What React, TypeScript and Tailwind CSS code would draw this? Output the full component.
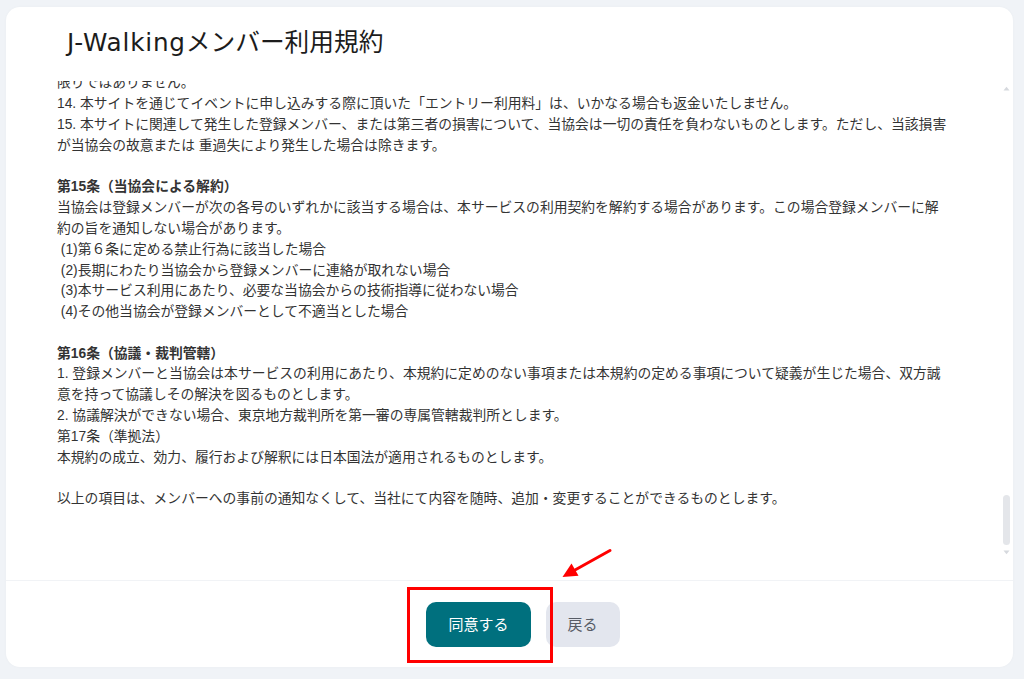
import { useLayoutEffect, useRef } from "react";

type Section = { title?: string; lines: string[] };

const sections: Section[] = [
  {
    title: "第1条（目的）",
    lines: [
      "本規約は、一般社団法人日本ウオーキング協会（以下「当協会」といいます。）が運営するJ-Walking（以下「本サイト」といいます。）において提供するサービス（以下「本サービス」といいます。）の利用条件を定めるものです。",
    ],
  },
  {
    title: "第2条（定義）",
    lines: ["本規約において「登録メンバー」とは、本規約に同意のうえ、当協会所定の手続きにより登録を行った個人をいいます。"],
  },
  {
    title: "第3条（規約への同意）",
    lines: [
      "1. 登録メンバーは、本規約の内容に同意したうえで本サービスを利用するものとします。",
      "2. 当協会は、必要と判断した場合には、登録メンバーに通知することなく本規約を変更できるものとします。",
      "3. 変更後の本規約は、本サイト上に掲載した時点から効力を生じるものとします。",
    ],
  },
  {
    title: "第4条（メンバー登録）",
    lines: [
      "1. 本サービスの利用を希望する者は、当協会の定める方法により登録を申請するものとします。",
      "2. 当協会は、登録申請者が次の各号のいずれかに該当する場合、登録を承認しないことがあります。",
      " (1)登録申請の内容に虚偽、誤記または記載漏れがあった場合",
      " (2)過去に本規約に違反したことがある場合",
      " (3)その他当協会が登録を適当でないと判断した場合",
    ],
  },
  {
    title: "第5条（ID及びパスワードの管理）",
    lines: [
      "1. 登録メンバーは、自己の責任においてID及びパスワードを適切に管理するものとします。",
      "2. ID及びパスワードを第三者に利用させ、または貸与、譲渡、売買等をしてはならないものとします。",
      "3. ID及びパスワードの管理不十分、使用上の過誤、第三者の使用等による損害の責任は登録メンバーが負うものとし、当協会は一切の責任を負いません。",
    ],
  },
  {
    title: "第6条（禁止事項）",
    lines: [
      "登録メンバーは、本サービスの利用にあたり、以下の行為をしてはならないものとします。",
      " (1)法令または公序良俗に違反する行為",
      " (2)犯罪行為に関連する行為",
      " (3)当協会、他の登録メンバーまたは第三者の著作権、肖像権その他の権利を侵害する行為",
      " (4)他の登録メンバーまたは第三者を誹謗中傷し、または名誉を傷つける行為",
      " (5)本サービスの運営を妨害するおそれのある行為",
      " (6)不正アクセスをし、またはこれを試みる行為",
      " (7)他の登録メンバーになりすます行為",
      " (8)本サービスを営利目的で利用する行為",
      " (9)その他当協会が不適切と判断する行為",
    ],
  },
  {
    title: "第7条（登録情報の変更）",
    lines: ["登録メンバーは、登録情報に変更が生じた場合には、速やかに当協会所定の方法により変更の手続きを行うものとします。"],
  },
  {
    title: "第8条（個人情報の取扱い）",
    lines: [
      "1. 当協会は、登録メンバーの個人情報を、当協会が別途定めるプライバシーポリシーに従い適切に取り扱うものとします。",
      "2. 当協会は、イベントの運営、参加記録の管理、各種お知らせの送付のために個人情報を利用することがあります。",
    ],
  },
  {
    title: "第9条（イベントへの参加）",
    lines: [
      "1. 登録メンバーは、本サイトを通じて当協会または加盟団体が主催するイベントに申し込むことができます。",
      "2. イベントへの参加にあたっては、主催者の定める参加規約及び指示に従うものとします。",
      "3. 登録メンバーは、自己の健康状態を十分に考慮したうえでイベントに参加するものとします。",
    ],
  },
  {
    title: "第10条（ポイント及び記録）",
    lines: [
      "1. 当協会は、登録メンバーのイベント参加実績に応じて、当協会所定のポイントを付与することがあります。",
      "2. ポイントは第三者に譲渡し、または換金することはできません。",
      "3. 当協会は、登録メンバーに事前に通知することなく、ポイントの付与基準を変更することがあります。",
    ],
  },
  {
    title: "第11条（サービスの停止・変更）",
    lines: [
      "1. 当協会は、以下のいずれかに該当する場合には、登録メンバーに事前に通知することなく本サービスの全部または一部の提供を停止または中断することができるものとします。",
      " (1)本サービスにかかるシステムの保守点検または更新を行う場合",
      " (2)地震、落雷、火災、停電または天災などの不可抗力により本サービスの提供が困難となった場合",
      " (3)コンピュータまたは通信回線等が事故により停止した場合",
      " (4)その他当協会が本サービスの提供が困難と判断した場合",
      "2. 当協会は、本サービスの提供の停止または中断により登録メンバーまたは第三者が被ったいかなる不利益または損害についても、一切の責任を負わないものとします。",
    ],
  },
  {
    title: "第12条（退会）",
    lines: ["登録メンバーは、当協会所定の退会手続きにより、本サービスから退会できるものとします。"],
  },
  {
    title: "第13条（著作権）",
    lines: ["本サイトに掲載されている文章、画像、その他のコンテンツの著作権は、当協会または正当な権利を有する第三者に帰属します。"],
  },
  {
    title: "第14条（免責事項）",
    lines: [
      "1. 当協会は、本サービスに事実上または法律上の瑕疵（安全性、信頼性、正確性、完全性、有効性、特定の目的への適合性、セキュリティなどに関する欠陥、エラーやバグ、権利侵害などを含みます。）がないことを明示的にも黙示的にも保証しておりません。",
      "2. 当協会は、本サービスに起因して登録メンバーに生じたあらゆる損害について、一切の責任を負いません。",
      "3. 当協会は、本サイトに掲載する情報の正確性について万全を期しておりますが、その内容を保証するものではありません。",
      "4. イベントの開催内容、日程及びコースは、主催者の都合により予告なく変更または中止となる場合があります。",
      "5. 天候不良、災害その他やむを得ない事由によりイベントが中止となった場合であっても、当協会は一切の責任を負いません。",
      "6. イベント参加中に発生した事故、負傷、疾病等について、当協会は主催者が加入する保険の範囲内で対応するものとし、それ以外の責任は負いません。",
      "7. 登録メンバー同士または登録メンバーと第三者との間で生じたトラブルについて、当協会は一切関与しないものとします。",
      "8. 本サイトからリンクされた外部サイトの内容について、当協会は一切の責任を負いません。",
      "9. 登録メンバーが使用する端末、通信環境等に起因して本サービスを利用できない場合、当協会は一切の責任を負いません。",
      "10. 当協会は、登録メンバーの登録情報の消失、破損等について、一切の責任を負いません。",
      "11. 本サービスの利用により登録メンバーが取得したポイント、記録等が、システム障害等により消失した場合であっても、当協会はその復旧について責任を負いません。",
      "12. 当協会は、本サービスの内容の変更または本サービスの提供の終了によって登録メンバーに生じた損害について、一切の責任を負いません。",
      "13. 前各項の規定にかかわらず、当協会の故意または重大な過失により登録メンバーに損害が生じた場合における当協会の責任については、この限りではありません。",
      "14. 本サイトを通じてイベントに申し込みする際に頂いた「エントリー利用料」は、いかなる場合も返金いたしません。",
      "15. 本サイトに関連して発生した登録メンバー、または第三者の損害について、当協会は一切の責任を負わないものとします。ただし、当該損害が当協会の故意または 重過失により発生した場合は除きます。",
    ],
  },
  {
    title: "第15条（当協会による解約）",
    lines: [
      "当協会は登録メンバーが次の各号のいずれかに該当する場合は、本サービスの利用契約を解約する場合があります。この場合登録メンバーに解約の旨を通知しない場合があります。",
      " (1)第６条に定める禁止行為に該当した場合",
      " (2)長期にわたり当協会から登録メンバーに連絡が取れない場合",
      " (3)本サービス利用にあたり、必要な当協会からの技術指導に従わない場合",
      " (4)その他当協会が登録メンバーとして不適当とした場合",
    ],
  },
  {
    title: "第16条（協議・裁判管轄）",
    lines: [
      "1. 登録メンバーと当協会は本サービスの利用にあたり、本規約に定めのない事項または本規約の定める事項について疑義が生じた場合、双方誠意を持って協議しその解決を図るものとします。",
      "2. 協議解決ができない場合、東京地方裁判所を第一審の専属管轄裁判所とします。",
      "第17条（準拠法）",
      "本規約の成立、効力、履行および解釈には日本国法が適用されるものとします。",
    ],
  },
  {
    lines: ["以上の項目は、メンバーへの事前の通知なくして、当社にて内容を随時、追加・変更することができるものとします。"],
  },
];

export default function App() {
  const scrollRef = useRef<HTMLDivElement>(null);

  useLayoutEffect(() => {
    const el = scrollRef.current;
    if (el) el.scrollTop = el.scrollHeight;
  }, []);

  return (
    <div className="relative h-screen w-full overflow-hidden bg-[#f0f3f7] pt-[7px]">
      <div className="ml-[6px] flex h-[660px] w-[1007px] flex-col rounded-[14px] bg-white shadow-[0_0_3px_rgba(0,0,0,0.03)]">
        <div className="h-[74px] shrink-0 pl-[61px] pt-[19px]">
          <h1 className="font-['DejaVu_Sans','Noto_Sans_CJK_JP',sans-serif] text-[24.7px] leading-[34px] font-normal text-[#1c1c1c]">
            <span className="tracking-[0.8px]">J-Walking</span>メンバー利用規約
          </h1>
        </div>

        <div className="relative h-[479px] shrink-0">
          <div
            ref={scrollRef}
            className="h-full overflow-y-auto pr-[61px] pb-[50px] pl-[51px] font-['Liberation_Sans','Noto_Sans_CJK_JP',sans-serif] text-[13.8px] leading-[20.8px] text-[#333] [scrollbar-width:none] [&::-webkit-scrollbar]:hidden"
          >
            {sections.map((s, i) => (
              <section key={i} className={i === sections.length - 1 ? "" : "mb-[20.8px]"}>
                {s.title && <h2 className="font-bold">{s.title}</h2>}
                {s.lines.map((line, j) => (
                  <p key={j} className="whitespace-pre-wrap">
                    {line}
                  </p>
                ))}
              </section>
            ))}
          </div>

          {/* scrollbar indicator */}
          <div aria-hidden className="pointer-events-none absolute top-0 right-[3px] bottom-0 w-[7px]">
            <svg className="absolute top-[5px] left-0" width="7" height="5" viewBox="0 0 7 5">
              <polygon points="0.5,4.5 3.5,0.8 6.5,4.5" fill="#d6d9de" />
            </svg>
            <div className="absolute top-[414px] left-0 h-[50px] w-[7px] rounded-full bg-[#e4e6ea]" />
            <svg className="absolute top-[469px] left-0" width="7" height="5" viewBox="0 0 7 5">
              <polygon points="0.5,0.5 6.5,0.5 3.5,4.2" fill="#d6d9de" />
            </svg>
          </div>
        </div>

        <div className="h-[20px] shrink-0" />

        <div className="flex shrink-0 justify-center gap-[15px] border-t border-[#f1f3f6] pt-[21px] pb-[20px] pl-[27px] font-['Noto_Sans_CJK_JP',sans-serif] text-[15px]">
          <button className="h-[45px] rounded-[10px] bg-[#00707e] px-[22px] text-white">同意する</button>
          <button className="h-[45px] rounded-[10px] bg-[#e3e6ee] px-[22px] text-[#575c66]">戻る</button>
        </div>
      </div>

      {/* annotation overlay */}
      <div className="pointer-events-none absolute top-[587px] left-[407px] h-[76px] w-[146px] border-[3px] border-[#f00]" />
      <svg
        className="pointer-events-none absolute top-[540px] left-[550px]"
        width="70"
        height="45"
        viewBox="550 540 70 45"
      >
        <line x1="610" y1="550.5" x2="575" y2="570" stroke="#f00" strokeWidth="3" strokeLinecap="round" />
        <polygon points="562.5,577 578.5,575.8 571.5,563.5" fill="#f00" />
      </svg>
    </div>
  );
}
